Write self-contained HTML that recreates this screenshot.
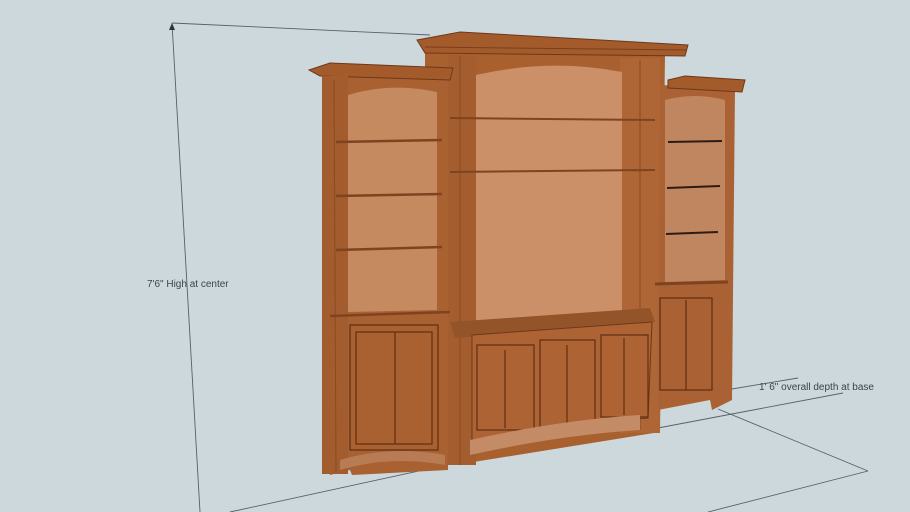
<!DOCTYPE html>
<html><head><style>
html,body{margin:0;padding:0;background:#cdd8dc;width:910px;height:512px;overflow:hidden}
svg{display:block}
text{font-family:"Liberation Sans",sans-serif;font-size:10px;fill:#3c4448}
</style></head><body>
<svg width="910" height="512" viewBox="0 0 910 512">
<rect width="910" height="512" fill="#cdd8dc"/>
<g stroke="#55606a" stroke-width="0.9" fill="none">
<line x1="172" y1="23" x2="200" y2="512"/>
<line x1="172" y1="23" x2="430" y2="35"/>
<line x1="230" y1="512" x2="460" y2="462"/>
<line x1="720" y1="391" x2="798" y2="378"/>
<line x1="658" y1="428" x2="843" y2="393"/>
<line x1="718" y1="409" x2="868" y2="471"/>
<line x1="708" y1="512" x2="868" y2="471"/>
</g>
<polygon points="172,23 169,30 175,30" fill="#333"/>
<text x="147" y="287">7'6" High at center</text>
<text x="759" y="390">1' 6" overall depth at base</text>

<polygon points="425,50 665,55 660,432 455,465 425,440" fill="#a9602f"/>
<polygon points="417,40 460,32 688,45 685,56 425,53" fill="#a35b2c" stroke="#6e3818" stroke-width="1"/>
<line x1="425" y1="47" x2="686" y2="50" stroke="#7a3e1c" stroke-width="1"/>
<rect x="448" y="55" width="28" height="410" fill="#a45d2f"/>
<line x1="460" y1="56" x2="460" y2="465" stroke="#8a4a22" stroke-width="1"/>
<rect x="620" y="58" width="40" height="375" fill="#ae6636"/>
<line x1="640" y1="60" x2="640" y2="430" stroke="#8a4a22" stroke-width="1"/>
<path d="M476,75 Q550,58 622,72 L622,320 L476,322 Z" fill="#cc9069"/>
<line x1="450" y1="118" x2="655" y2="120" stroke="#7e4420" stroke-width="2"/>
<line x1="450" y1="172" x2="655" y2="170" stroke="#7e4420" stroke-width="2"/>
<polygon points="450,322 650,308 655,322 455,338" fill="#94542a"/>
<polygon points="472,335 652,322 648,418 560,425 472,440" fill="#ad6334" stroke="#6e3818" stroke-width="1"/>
<g fill="none" stroke="#5e2e12" stroke-width="1.2">
<rect x="477" y="345" width="57" height="85"/>
<line x1="505" y1="350" x2="505" y2="428"/>
<rect x="540" y="340" width="55" height="88"/>
<line x1="567" y1="345" x2="567" y2="425"/>
<rect x="601" y="335" width="47" height="82"/>
<line x1="624" y1="338" x2="624" y2="415"/>
</g>
<path d="M470,440 Q560,420 640,415 L640,430 Q560,435 470,455 Z" fill="#c48c66"/>

<polygon points="322,72 448,78 448,470 352,475 350,470 330,475 328,470" fill="#aa6132"/>
<polygon points="309,70 330,63 453,68 450,80 320,76" fill="#a35b2c" stroke="#6e3818" stroke-width="1"/>
<rect x="322" y="76" width="26" height="398" fill="#a35c2e"/>
<line x1="334" y1="80" x2="336" y2="472" stroke="#8a4a22" stroke-width="1"/>
<path d="M348,95 Q390,82 437,92 L437,310 L348,312 Z" fill="#c68a60"/>
<g stroke="#7e4420" stroke-width="2.5">
<line x1="336" y1="142" x2="442" y2="140"/>
<line x1="336" y1="196" x2="442" y2="194"/>
<line x1="336" y1="250" x2="442" y2="247"/>
<line x1="330" y1="316" x2="450" y2="312"/>
</g>
<g fill="none" stroke="#5e2e12" stroke-width="1.2">
<rect x="350" y="325" width="88" height="125"/>
<rect x="356" y="332" width="76" height="112"/>
<line x1="395" y1="332" x2="395" y2="444"/>
</g>
<path d="M340,460 Q390,445 445,455 L445,465 Q390,455 340,470 Z" fill="#b87c55"/>

<polygon points="660,85 735,88 732,400 712,410 710,400 658,410" fill="#aa6234"/>
<polygon points="668,80 685,76 745,80 742,92 668,88" fill="#a35b2c" stroke="#6e3818" stroke-width="1"/>
<path d="M665,100 Q695,92 725,100 L725,280 L665,282 Z" fill="#c08660"/>
<g stroke="#2e1c14" stroke-width="2">
<line x1="668" y1="142" x2="722" y2="141"/>
<line x1="667" y1="188" x2="720" y2="186"/>
<line x1="666" y1="234" x2="718" y2="232"/>
</g>
<line x1="655" y1="284" x2="728" y2="282" stroke="#7e4420" stroke-width="3"/>
<g fill="none" stroke="#5e2e12" stroke-width="1.2">
<rect x="660" y="298" width="52" height="92"/>
<line x1="686" y1="300" x2="686" y2="390"/>
</g>
</svg>
</body></html>
